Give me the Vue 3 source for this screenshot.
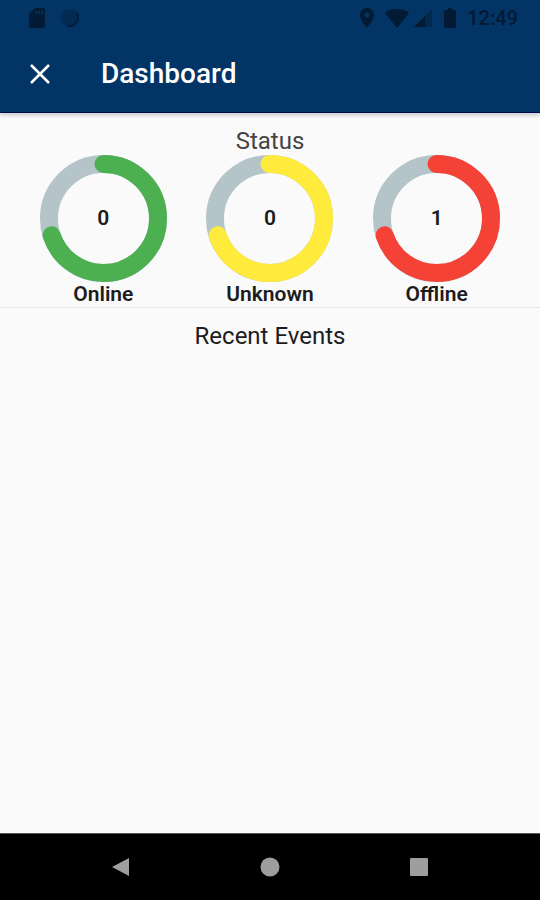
<template>
  <div class="screen">
    <div class="status-bar">
      <div class="status-left">
        <svg width="16" height="20" viewBox="0 0 16 20">
          <path class="dark" d="M6 0h8a2 2 0 0 1 2 2v16a2 2 0 0 1-2 2H2a2 2 0 0 1-2-2V6z" />
          <path class="hole" d="M6 3h2v3H6zM9 3h2v3H9zM12 3h2v3h-2z" />
        </svg>
        <svg width="20" height="20" viewBox="0 0 20 20">
          <circle class="shade" cx="9" cy="10" r="9" />
          <path class="rim" d="M16 5a9 9 0 0 1-10 13" />
        </svg>
      </div>
      <div class="status-right">
        <svg width="14" height="20" viewBox="0 0 14 20">
          <path class="dark" fill-rule="evenodd" d="M7 0a7 7 0 0 0-7 7c0 5 7 13 7 13s7-8 7-13a7 7 0 0 0-7-7zm0 4.500a2.500 2.500 0 1 1 0 5 2.500 2.500 0 0 1 0-5z" />
        </svg>
        <svg class="wifi" width="24" height="20" viewBox="0 0 24 20">
          <path class="dark" d="M12 20 0 5C3 2.500 7 1 12 1s9 1.500 12 4z" />
        </svg>
        <svg class="signal" width="18" height="20" viewBox="0 0 18 20">
          <path class="faint" d="M0 19 18 1v18z" />
          <path class="dark" d="M0 19 11 8v11z" />
        </svg>
        <svg class="battery" width="12" height="20" viewBox="0 0 12 20">
          <path class="dark" d="M4 0h4v2h3l1 1v16l-1 1H1l-1-1V3l1-1h3z" />
        </svg>
        <span class="clock">12:49</span>
      </div>
    </div>

    <header class="app-bar">
      <button class="btn-close" type="button" aria-label="Close">
        <svg width="20" height="20" viewBox="0 0 20 20">
          <path d="M1 1l18 18M19 1L1 19" />
        </svg>
      </button>
      <h1>Dashboard</h1>
    </header>

    <main class="content">
      <section class="status-section">
        <h2 class="muted">Status</h2>
        <div class="rings">
          <div v-for="item in status" :key="item.label" class="ring-item">
            <div class="ring">
              <svg viewBox="0 0 127 127">
                <circle class="track" cx="63.500" cy="63.500" r="54.500" />
                <circle
                  class="value"
                  cx="63.500"
                  cy="63.500"
                  r="54.500"
                  pathLength="100"
                  :stroke="item.color"
                  :stroke-dasharray="`${item.percent} 100`"
                />
              </svg>
              <span class="count">{{ item.count }}</span>
            </div>
            <span class="label">{{ item.label }}</span>
          </div>
        </div>
      </section>
      <section class="events-section">
        <h2>Recent Events</h2>
      </section>
    </main>

    <nav class="nav-bar">
      <button type="button" aria-label="Back">
        <svg width="20" height="20" viewBox="0 0 20 20"><path d="M1 10 18 1v18z" /></svg>
      </button>
      <button type="button" aria-label="Home">
        <svg width="20" height="20" viewBox="0 0 20 20"><circle cx="10" cy="10" r="9.500" /></svg>
      </button>
      <button type="button" aria-label="Recent apps">
        <svg width="20" height="20" viewBox="0 0 20 20"><rect x="1" y="1" width="18" height="18" rx="1" /></svg>
      </button>
    </nav>
  </div>
</template>

<script setup>
import { ref } from 'vue';

const status = ref([
  { label: 'Online', count: 0, percent: 70, color: '#4caf50' },
  { label: 'Unknown', count: 0, percent: 70, color: '#ffeb3b' },
  { label: 'Offline', count: 1, percent: 70, color: '#f44336' }
]);
</script>

<style>
body {
  margin: 0;
}
</style>

<style scoped>
.screen {
  min-height: 100vh;
  display: flex;
  flex-direction: column;
  background: #fafafa;
  color: #1c1c1c;
  font-family: Roboto, "Liberation Sans", sans-serif;
}
svg {
  display: block;
}
.status-bar {
  display: flex;
  justify-content: space-between;
  height: 36px;
  padding: 0 22px 0 29px;
  background: #023465;
}
.status-left,
.status-right {
  display: flex;
  align-items: center;
}
.status-left {
  gap: 16px;
}
.dark {
  fill: #021a33;
}
.faint {
  fill: #02284d;
}
.hole {
  fill: #023058;
}
.shade {
  fill: #022a52;
}
.rim {
  fill: none;
  stroke: #021f3d;
  stroke-width: 2;
}
.wifi {
  margin-left: 11px;
}
.signal {
  margin-left: 5px;
}
.battery {
  margin-left: 12px;
}
.clock {
  margin-left: 11px;
  font-size: 20px;
  font-weight: 500;
  line-height: 20px;
  color: #021a33;
}
.app-bar {
  display: flex;
  align-items: center;
  height: 76px;
  padding: 0 16px;
  background: #023465;
  border-bottom: 1px solid #020a52;
  box-shadow: 0 3px 3px rgba(0, 0, 0, 0.15);
}
.btn-close {
  display: flex;
  align-items: center;
  justify-content: center;
  width: 48px;
  height: 48px;
  padding: 0;
  border: none;
  background: none;
  cursor: pointer;
}
.btn-close path {
  fill: none;
  stroke: #fff;
  stroke-width: 2.5;
}
h1 {
  margin: 0 0 0 37px;
  color: #fff;
  font-size: 28px;
  font-weight: 500;
  line-height: 32px;
}
.content {
  flex: 1;
}
h2 {
  margin: 0;
  font-size: 24px;
  font-weight: 400;
  line-height: 28px;
  text-align: center;
}
.muted {
  color: #444;
}
.status-section {
  padding-top: 14px;
  border-bottom: 1px solid #e6e6e6;
}
.rings {
  display: grid;
  grid-template-columns: repeat(3, 1fr);
  padding: 0 20px;
}
.ring-item {
  display: flex;
  flex-direction: column;
  align-items: center;
}
.ring {
  display: grid;
  place-items: center;
  width: 127px;
  height: 127px;
}
.ring > * {
  grid-area: 1 / 1;
}
.ring svg {
  width: 100%;
  height: 100%;
  transform: rotate(-90deg);
}
.ring circle {
  fill: none;
  stroke-width: 18;
}
.track {
  stroke: #b4c4c9;
}
.value {
  stroke-linecap: round;
}
.count,
.label {
  font-size: 21px;
  font-weight: 600;
  line-height: 25px;
}
.events-section {
  padding-top: 14px;
}
.nav-bar {
  display: grid;
  grid-template-columns: repeat(3, 1fr);
  height: 66px;
  padding: 0 47px;
  background: #000;
  border-top: 1px solid #555;
}
.nav-bar button {
  display: flex;
  align-items: center;
  justify-content: center;
  padding: 0;
  border: none;
  background: none;
  cursor: pointer;
}
.nav-bar svg {
  fill: #9e9e9e;
}
</style>
